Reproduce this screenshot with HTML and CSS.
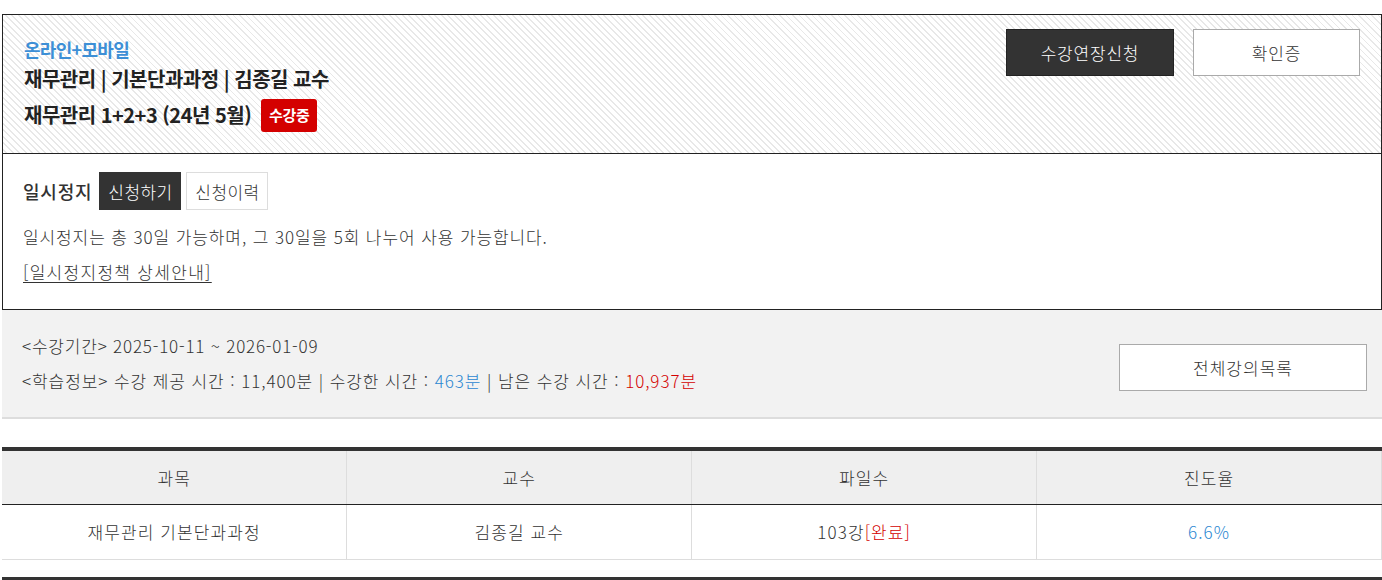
FILE: index.html
```html
<!DOCTYPE html>
<html lang="ko">
<head>
<meta charset="utf-8">
<link rel="stylesheet" href="styles.css">
</head>
<body>
<div class="page">
  <section class="course">
    <div class="course-info">
      <div class="course-type">온라인+모바일</div>
      <div class="course-title">재무관리 | 기본단과과정 | 김종길 교수</div>
      <div class="course-sub">재무관리 1+2+3 (24년 5월) <span class="badge">수강중</span></div>
    </div>
    <div class="course-actions">
      <a class="btn btn-dark btn-lg">수강연장신청</a>
      <a class="btn btn-light btn-lg btn-cert">확인증</a>
    </div>
  </section>

  <section class="pause">
    <div class="pause-head">
      <span class="pause-label">일시정지</span>
      <a class="btn btn-dark btn-sm">신청하기</a>
      <a class="btn btn-outline btn-sm">신청이력</a>
    </div>
    <p class="pause-text">일시정지는 총 30일 가능하며, 그 30일을 5회 나누어 사용 가능합니다.</p>
    <p class="pause-text"><a class="pause-link">[일시정지정책 상세안내]</a></p>
  </section>

  <section class="study">
    <div class="study-info">
      <p>&lt;수강기간&gt; 2025-10-11 ~ 2026-01-09</p>
      <p class="study-line">&lt;학습정보&gt; 수강 제공 시간 : 11,400분 | 수강한 시간 : <span class="blue">463분</span> | 남은 수강 시간 : <span class="red">10,937분</span></p>
    </div>
    <a class="btn btn-light btn-list">전체강의목록</a>
  </section>

  <table class="lecture-table">
    <thead>
      <tr><th>과목</th><th>교수</th><th>파일수</th><th>진도율</th></tr>
    </thead>
    <tbody>
      <tr><td>재무관리 기본단과과정</td><td>김종길 교수</td><td>103강<span class="red">[완료]</span></td><td class="blue">6.6%</td></tr>
    </tbody>
  </table>
  <div class="table-end"></div>
</div>
</body>
</html>
```

FILE: styles.css
```css
* { box-sizing: border-box; }
html, body { margin: 0; padding: 0; background: #fff; }
body {
  font-family: "Noto Sans CJK KR", "Noto Sans", sans-serif;
  color: #333;
  overflow: hidden;
}
p { margin: 0; }
a { text-decoration: none; color: inherit; cursor: pointer; }

.page {
  width: 1382px;
  padding: 14px 0 0 2px;
}

/* ---------- course header ---------- */
.course {
  height: 140px;
  border: 1px solid #222;
  padding: 14px 21px 0 21px;
  display: flex;
  justify-content: space-between;
  align-items: flex-start;
  background: repeating-linear-gradient(45deg, #fff 0, #fff 2px, #e8e8e8 2px, #e8e8e8 3.3px, #fff 3.3px, #fff 4.6px);
}
.course-info { display: flex; flex-direction: column; padding-top: 5px; }
.course-type {
  color: #3d8fd6;
  font-size: 18px;
  font-weight: 700;
  line-height: 30px;
  letter-spacing: -0.7px;
}
.course-title {
  color: #222;
  font-size: 20px;
  font-weight: 700;
  line-height: 30px;
  letter-spacing: -0.5px;
}
.course-sub {
  color: #222;
  font-size: 20px;
  font-weight: 700;
  line-height: 36px;
  margin-top: 3px;
  letter-spacing: -0.5px;
  display: flex;
  align-items: center;
  gap: 10px;
}
.badge {
  display: inline-flex;
  align-items: center;
  justify-content: center;
  width: 56px;
  height: 33px;
  border-radius: 3px;
  background: #d40000;
  color: #fff;
  font-size: 15px;
  letter-spacing: -0.3px;
}
.course-actions { display: flex; gap: 19px; }

/* ---------- buttons ---------- */
.btn {
  display: inline-flex;
  align-items: center;
  justify-content: center;
  font-weight: 300;
  letter-spacing: 0.8px;
}
.btn-lg { width: 168px; height: 47px; font-size: 17px; }
.btn-cert { width: 167px; }
.btn-dark { background: #333; color: #fff; border: 1px solid #222; }
.btn-light { background: #fff; color: #333; border: 1px solid #aaa; }
.btn-outline { background: #fff; color: #333; border: 1px solid #ddd; }
.btn-sm { width: 82px; height: 38px; font-size: 17px; letter-spacing: 0.4px; }

/* ---------- pause ---------- */
.pause {
  border: 1px solid #222;
  border-top: none;
  padding: 18px 20px 19px 20px;
  height: 156px;
}
.pause-head { display: flex; align-items: center; gap: 5px; height: 38px; }
.pause-label { font-size: 18px; font-weight: 500; color: #333; margin-right: 2px; letter-spacing: 0.8px; }
.pause-head .btn-dark { border-color: #333; }
.pause-text {
  font-size: 17px;
  font-weight: 300;
  line-height: 35px;
  letter-spacing: 0.9px;
}
.pause-head + .pause-text { margin-top: 9px; }
.pause-link { text-decoration: underline; text-underline-offset: 3px; letter-spacing: 1.3px; }

/* ---------- study info ---------- */
.study {
  background: #f2f2f2;
  border-bottom: 2px solid #ddd;
  height: 109px;
  padding: 18px 15px 0 20px;
  display: flex;
  justify-content: space-between;
  align-items: flex-start;
}
.study-info p {
  font-size: 17px;
  font-weight: 300;
  line-height: 35px;
  letter-spacing: 0.8px;
}
.study-info .study-line { letter-spacing: 0.92px; }
.btn-list { width: 248px; height: 47px; font-size: 17px; margin-top: 16px; letter-spacing: 1px; }
.blue { color: #2b87d1; }
.red { color: #d40000; }

/* ---------- table ---------- */
.lecture-table {
  margin-top: 28px;
  width: 1380px;
  border-collapse: collapse;
  table-layout: fixed;
  border-top: 4px solid #333;
}
.lecture-table th,
.lecture-table td {
  text-align: center;
  font-size: 17px;
  font-weight: 300;
  letter-spacing: 1.1px;
  color: #333;
  border-left: 1px solid #ddd;
  border-right: 1px solid #ddd;
}
.lecture-table th:first-child,
.lecture-table td:first-child { border-left: none; }
.lecture-table th {
  height: 55px;
  background: #efefef;
  border-bottom: 1px solid #222;
}
.lecture-table td {
  height: 55px;
  background: #fff;
  border-bottom: 1px solid #ddd;
}
.lecture-table td.blue { color: #2b87d1; }
.table-end {
  margin-top: 17px;
  height: 4px;
  width: 1380px;
  background: #333;
}
```
